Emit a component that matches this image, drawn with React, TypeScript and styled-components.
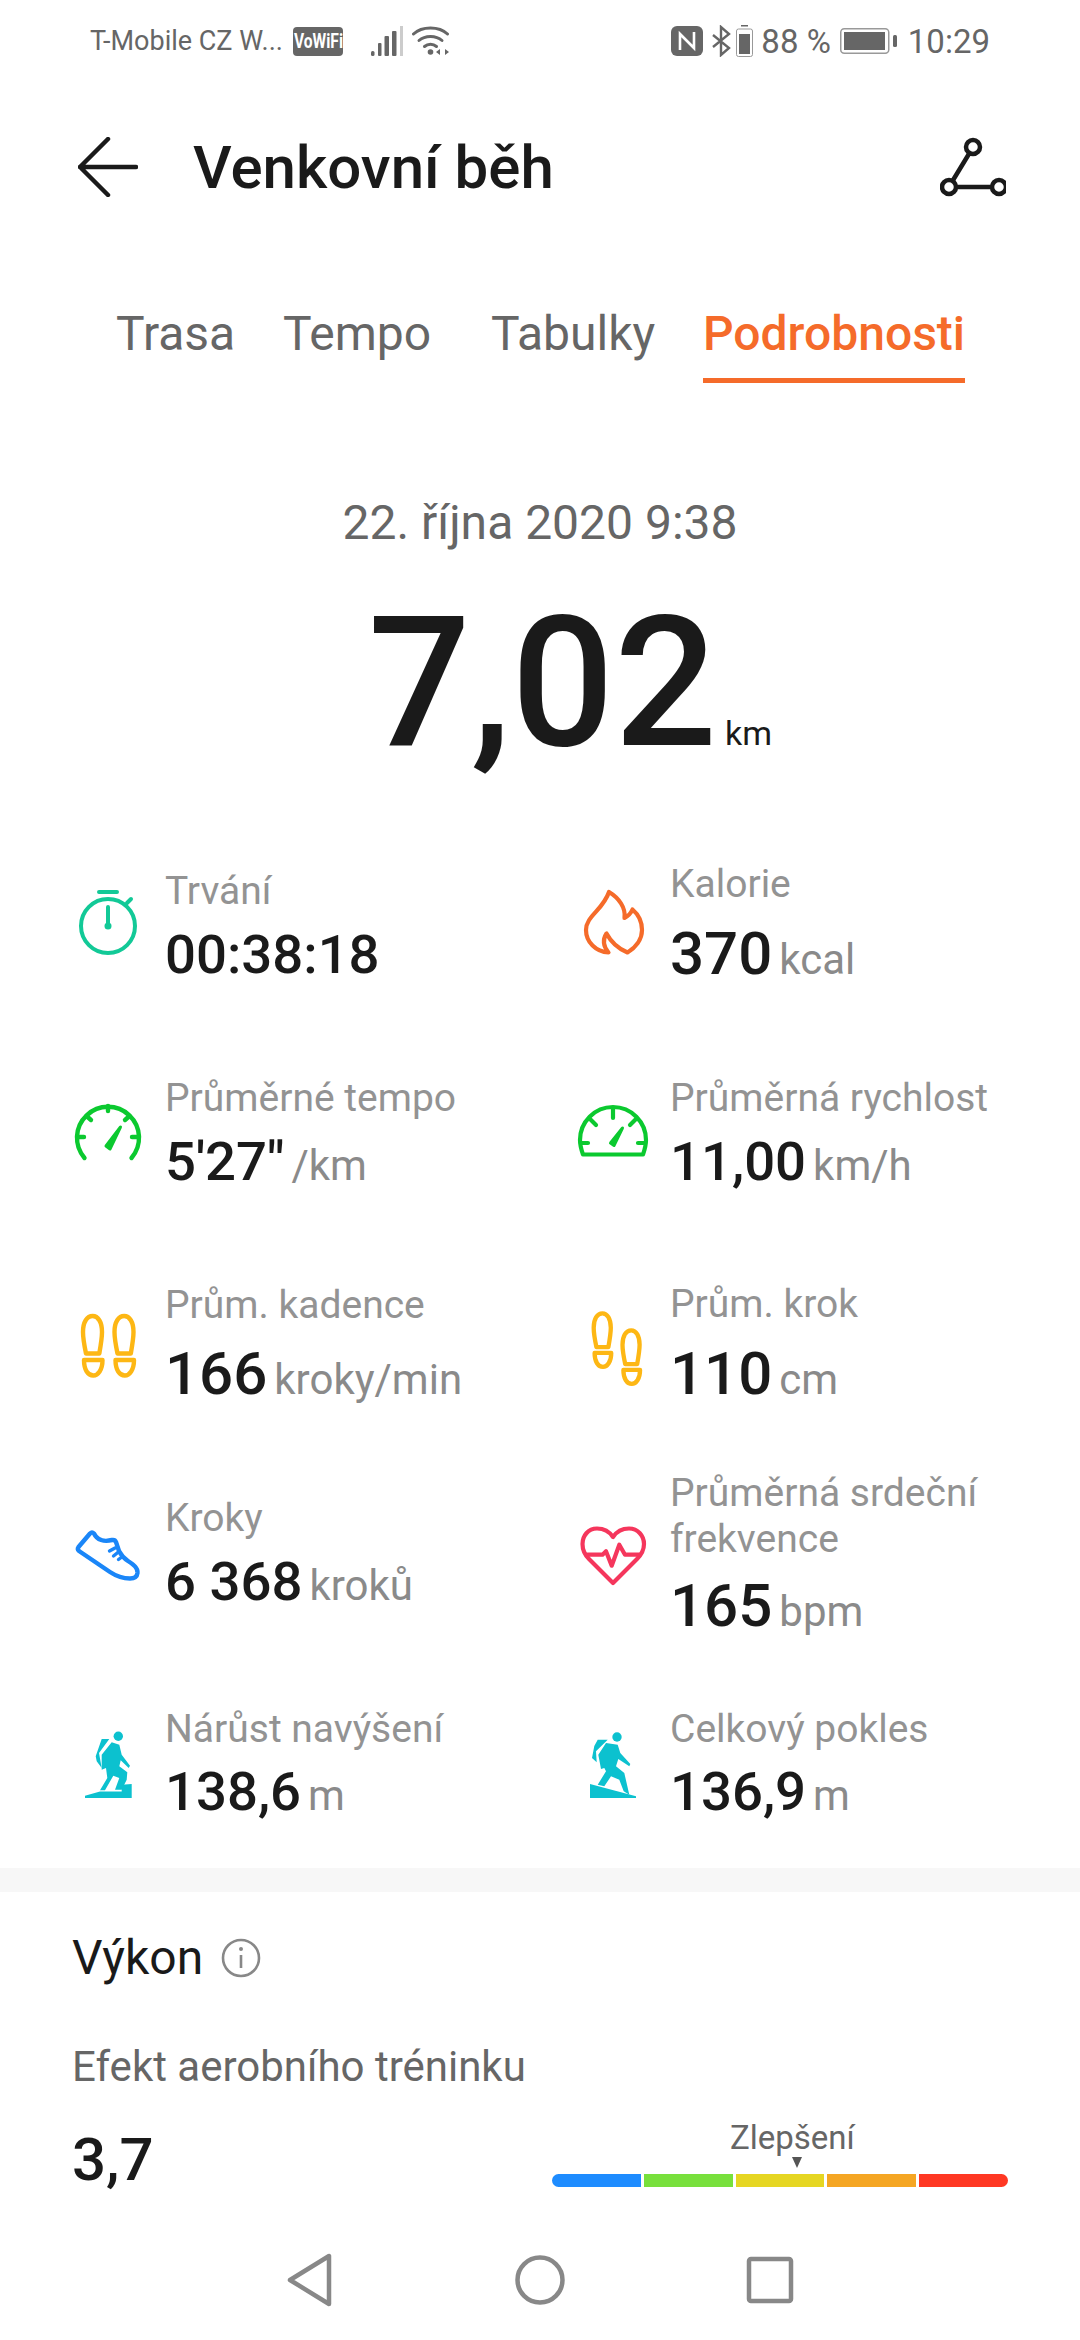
import React from "react"
import styled, { createGlobalStyle } from "styled-components"

const Global = createGlobalStyle`
  html, body { margin: 0; padding: 0; background: #fff; }
  body { font-family: Roboto, "Noto Sans", sans-serif; }
`

const Page = styled.div`
  width: 1080px;
  height: 2340px;
  overflow: hidden;
  background: #fff;
  display: flex;
  flex-direction: column;
`

const StatusBar = styled.div`
  height: 82px;
  padding: 0 90px 0 90px;
  display: flex;
  justify-content: space-between;
  align-items: center;
  color: #666;
`

const StatusGroup = styled.div`
  display: flex;
  align-items: center;
`

const Carrier = styled.span`
  font-size: 27px;
  width: 203px;
  white-space: nowrap;
`

const VoWifi = styled.span`
  width: 50px;
  height: 29px;
  border-radius: 4px;
  background: #666;
  color: #fff;
  margin-right: 28px;
  display: flex;
  justify-content: center;
  align-items: center;
  overflow: hidden;
`

const VoWifiText = styled.span`
  font-size: 20px;
  font-weight: 700;
  transform: scaleX(0.78);
  white-space: nowrap;
`

const StatusText = styled.span<{ $left?: number }>`
  font-size: 33px;
  margin-left: ${(p) => p.$left ?? 0}px;
`

const Header = styled.div`
  height: 170px;
  padding: 0 74px 0 78px;
  display: flex;
  align-items: center;
`

const Title = styled.h1`
  margin: 0 0 0 55px;
  flex: 1;
  font-size: 60px;
  font-weight: 500;
  color: #1a1a1a;
`

const Tabs = styled.div`
  height: 131px;
  padding-left: 116px;
  display: grid;
  grid-template-columns: 167px 208px 212px auto;
  justify-content: start;
  align-items: end;
`

const Tab = styled.div<{ $active?: boolean }>`
  justify-self: start;
  font-size: 48px;
  line-height: 60px;
  padding-bottom: 14px;
  font-weight: ${(p) => (p.$active ? 500 : 400)};
  color: ${(p) => (p.$active ? "#f56b2a" : "#666")};
  border-bottom: 5px solid ${(p) => (p.$active ? "#f56b2a" : "transparent")};
`

const DateLine = styled.div`
  margin-top: 110px;
  text-align: center;
  font-size: 48px;
  line-height: 60px;
  color: #666;
`

const Distance = styled.div`
  margin-top: 30px;
  padding-left: 60px;
  display: flex;
  justify-content: center;
  align-items: baseline;
  color: #1a1a1a;
`

const DistanceValue = styled.span`
  font-size: 181px;
  line-height: 200px;
  font-weight: 500;
`

const DistanceUnit = styled.span`
  margin-left: 8px;
  font-size: 34px;
`

const StatGrid = styled.div`
  margin-top: 34px;
  padding-left: 72px;
  display: grid;
  grid-template-columns: 505px 1fr;
  grid-auto-rows: 210px;
`

const Stat = styled.div`
  display: flex;
  align-items: center;
  gap: 21px;
`

const IconBox = styled.svg`
  width: 72px;
  height: 72px;
  flex: none;
  overflow: visible;
`

const StatText = styled.div`
  width: 360px;
`

const StatLabel = styled.div`
  font-size: 39px;
  line-height: 46px;
  color: #939393;
`

const StatValueRow = styled.div<{ $gap: number }>`
  margin-top: ${(p) => p.$gap}px;
  display: flex;
  align-items: baseline;
  line-height: 46px;
  white-space: nowrap;
`

const StatValue = styled.span<{ $large?: boolean }>`
  font-size: ${(p) => (p.$large ? 60 : 54.5)}px;
  font-weight: 500;
  color: #1a1a1a;
`

const StatUnit = styled.span`
  margin-left: 7px;
  font-size: 42px;
  color: #8a8a8a;
`

const Band = styled.div`
  margin-top: 1px;
  height: 24px;
  background: #f7f7f7;
`

const Performance = styled.div`
  padding: 41px 72px 0;
`

const SectionTitle = styled.div`
  display: flex;
  align-items: center;
  gap: 18px;
  font-size: 48px;
  line-height: 50px;
  color: #1a1a1a;
`

const SectionLabel = styled.div`
  margin-top: 59px;
  font-size: 42px;
  line-height: 50px;
  color: #666;
`

const EffectRow = styled.div`
  margin-top: 26px;
  display: flex;
  justify-content: space-between;
`

const EffectValue = styled.div`
  font-size: 60px;
  line-height: 84px;
  font-weight: 500;
  color: #1a1a1a;
`

const Gauge = styled.div`
  width: 456px;
`

const GaugeLabel = styled.div`
  padding-left: 178px;
  font-size: 33px;
  line-height: 40px;
  color: #666;
`

const GaugeMarker = styled.div<{ $left: number }>`
  width: 0;
  height: 0;
  margin: -1px 0 6px ${(p) => p.$left}px;
  border-left: 5px solid transparent;
  border-right: 5px solid transparent;
  border-top: 11px solid #555;
`

const GaugeBar = styled.div`
  height: 13px;
  display: flex;
  gap: 3px;
  border-radius: 7px;
  overflow: hidden;
`

const GaugeSegment = styled.div<{ $color: string }>`
  flex: 1;
  background: ${(p) => p.$color};
`

const NavBar = styled.div`
  flex: 1;
  padding-top: 18px;
  display: flex;
  justify-content: center;
  align-items: center;
  gap: 180px;
`

const NavIcon = styled.svg`
  width: 50px;
  height: 54px;
`

const StopwatchIcon = () => (
  <IconBox viewBox="0 0 72 72" fill="none" stroke="#12c997" strokeWidth="4" strokeLinecap="round">
    <circle cx="36" cy="40" r="27" />
    <path d="M27 6H45M55 17L59 13M36 21V40" />
    <circle cx="36" cy="40" r="3.5" fill="#12c997" stroke="none" />
  </IconBox>
)

const PaceIcon = () => (
  <IconBox viewBox="0 0 72 72" fill="none" stroke="#0bc92f" strokeWidth="4.4" strokeLinecap="round">
    <path d="M12.500 62A31 31 0 1 1 59.500 62" />
    <path d="M5 41H12M60 41H67M36 10V15M14.500 20L19 24M57.500 20L53 24" />
    <path d="M34 50L48.500 31L38 53Z" fill="#0bc92f" strokeWidth="3" strokeLinejoin="round" />
  </IconBox>
)

const SpeedIcon = () => (
  <IconBox viewBox="0 0 72 72" fill="none" stroke="#0bc92f" strokeWidth="4.2" strokeLinecap="round">
    <path d="M6 58.500Q3 50 3 44A33 33 0 0 1 69 44Q69 50 66 58.500Z" strokeLinejoin="round" />
    <path d="M4 47H11M61 47H68M36 13V22M13 23L19 29M59 23L53 29" />
    <path d="M33.500 47L45.500 32L37 49.500Z" fill="#0bc92f" strokeWidth="3" strokeLinejoin="round" />
  </IconBox>
)

const FlameIcon = () => (
  <IconBox viewBox="0 0 72 72" fill="none" stroke="#f56b2a" strokeWidth="4.2" strokeLinejoin="round">
    <path d="M32 6C42 12 49 22 47.500 32C51 30 54 27 55.500 23.500C62 29 65 37 65 44C65 54 58 62 50.500 66.500C42 63 34 56 29.500 47.500C26 53 26 60 31.500 66.500C19 66 9 56 9 44C9 30 26 24 32 6Z" />
  </IconBox>
)

const Foot = ({ transform }: { transform?: string }) => (
  <g transform={transform}>
    <path d="M14 47.500C12 38 11 32 11 26C11 16 15 10 20.700 10C26 10 30 16 30 26C30 32 29 38 27.300 47.500Z" />
    <path d="M12 54H30.500C30.500 64 26 69.500 21.300 69.500C16 69.500 12 64 12 54Z" />
  </g>
)

const CadenceIcon = () => (
  <IconBox viewBox="0 0 72 72" fill="none" stroke="#fdb714" strokeWidth="4.4" strokeLinejoin="round">
    <Foot />
    <Foot transform="translate(31.5 0)" />
  </IconBox>
)

const StrideIcon = () => (
  <IconBox viewBox="0 0 72 72" fill="none" stroke="#fdb714" strokeWidth="4.8" strokeLinejoin="round">
    <Foot transform="translate(6.8 -1.7) scale(.9)" />
    <Foot transform="translate(35.6 15.3) scale(.9)" />
  </IconBox>
)

const ShoeIcon = () => (
  <IconBox viewBox="0 0 72 72" fill="none" stroke="#1a86f8" strokeWidth="4.4" strokeLinecap="round" strokeLinejoin="round">
    <path d="M6.500 31L18 17.500Q20 15.500 22 17.500C25 24 32 26 40 24Q43 23.500 44 26L47 35Q50 41 56 45C62 49 66 52 65.500 57C65 61 62 62.500 58 62.500C50 62.500 44 60 38 56L7 35Q5 33 6.500 31Z" />
    <path d="M37.500 35L43 32M41.500 40L47 35.500M46.500 43.500L50.500 40.500" strokeWidth="3.4" />
  </IconBox>
)

const HeartIcon = () => (
  <IconBox viewBox="0 0 72 72" fill="none" stroke="#f5365c" strokeWidth="4.2" strokeLinejoin="round" strokeLinecap="round">
    <path d="M36 21C32 15 26 12.500 20 12.500C11 12.500 5.500 20 5.500 28C5.500 34 8 39 12 43L36 67L60 43C64 39 67 34 67 28C67 20 61 12.500 52 12.500C46 12.500 40 15 36 21Z" />
    <path d="M10.500 38.700H25.500L29 35.300L34.700 49.700L42.300 28.700L48 38.700H62" />
  </IconBox>
)

const ClimbIcon = () => (
  <IconBox viewBox="0 0 72 72" fill="#0cc1cf">
    <circle cx="46.300" cy="10.300" r="4.700" />
    <path d="M13 69.700L28 65.500H49.700V58.700L59.700 58V72H13Z" />
    <path d="M29.700 13H37.300L27 27L29.700 42L24.700 35.300L23.700 30.300Z" />
    <path d="M39.700 16.300L47.300 18.700L49.700 28.700L58 39.700L56.700 42L48.700 34.300L47.300 40.300L55.300 46.300L54.700 53.700L49.700 63.700H43L47.300 52L41.300 49.700L33 64.300H28L35.300 52L34 42L29.700 43.700L29.700 28.700Z" />
  </IconBox>
)

const DescentIcon = () => (
  <IconBox viewBox="0 0 72 72" fill="#0cc1cf">
    <circle cx="40" cy="11" r="4.700" />
    <path d="M13 58L59 70.300V72H13Z" />
    <path d="M20.700 13.700H30.700L19 25.300L19.700 36.300L15 32L17.300 20Z" />
    <path d="M29 17L40.700 18.700L43.300 27L53.300 38L52.300 40.300L41.300 33L39 40.300L47.300 47L52.300 68.700L46.700 65.300L42.300 53.700L34 50.300L27.300 60.300L20.700 58.700L29 45.300L27.300 42L24 43L21.300 28.700Z" />
  </IconBox>
)

const stats = [
  { icon: <StopwatchIcon />, label: "Trvání", value: "00:38:18", gap: 17 },
  { icon: <FlameIcon />, label: "Kalorie", value: "370", unit: "kcal", gap: 24, large: true },
  { icon: <PaceIcon />, label: "Průměrné tempo", value: "5'27\"", unit: "/km", gap: 17 },
  { icon: <SpeedIcon />, label: "Průměrná rychlost", value: "11,00", unit: "km/h", gap: 17 },
  { icon: <CadenceIcon />, label: "Prům. kadence", value: "166", unit: "kroky/min", gap: 23, large: true },
  { icon: <StrideIcon />, label: "Prům. krok", value: "110", unit: "cm", gap: 24, large: true },
  { icon: <ShoeIcon />, label: "Kroky", value: "6 368", unit: "kroků", gap: 17 },
  { icon: <HeartIcon />, label: "Průměrná srdeční frekvence", value: "165", unit: "bpm", gap: 21, large: true },
  { icon: <ClimbIcon />, label: "Nárůst navýšení", value: "138,6", unit: "m", gap: 16 },
  { icon: <DescentIcon />, label: "Celkový pokles", value: "136,9", unit: "m", gap: 16 },
]

const gaugeColors = ["#1e8cff", "#78e03c", "#e6d622", "#f5a623", "#ff3823"]

export default function App() {
  return (
    <Page>
      <Global />
      <StatusBar>
        <StatusGroup>
          <Carrier>T-Mobile CZ W...</Carrier>
          <VoWifi>
            <VoWifiText>VoWiFi</VoWifiText>
          </VoWifi>
          <svg width="32" height="30" viewBox="0 0 32 30" fill="#666">
            <rect x="0" y="25" width="3.5" height="5" rx="1.5" />
            <rect x="7" y="17" width="3.5" height="13" rx="1" />
            <rect x="13.5" y="10" width="4.5" height="20" rx="1" />
            <rect x="21" y="5" width="4.5" height="25" rx="1" />
            <rect x="29" y="0" width="3" height="30" fill="#ccc" />
          </svg>
          <svg width="38" height="30" viewBox="0 0 38 30" fill="none" stroke="#666" strokeWidth="3" strokeLinecap="round" style={{ marginLeft: 9 }}>
            <path d="M1.5 8C10 0 27 0 35.500 8" />
            <path d="M7 14.500C13 9 24 9 30 14.500" />
            <path d="M12.500 20.500C16 17.500 21 17.500 24.500 20.500" />
            <circle cx="18.500" cy="26" r="2.800" fill="#666" stroke="none" />
            <path d="M24 26L28 23V29ZM33 23L37 26L33 29Z" fill="#666" stroke="none" />
          </svg>
        </StatusGroup>
        <StatusGroup>
          <svg width="32" height="30" viewBox="0 0 32 30">
            <rect width="32" height="30" rx="6" fill="#666" />
            <path d="M9 24V8L23 22V6" fill="none" stroke="#fff" strokeWidth="2.600" />
          </svg>
          <svg width="20" height="32" viewBox="0 0 20 32" fill="none" stroke="#666" strokeWidth="2.400" style={{ marginLeft: 9 }}>
            <path d="M1 10L17 23L9 30V2L17 9L1 22" />
          </svg>
          <svg width="17" height="32" viewBox="0 0 17 32" style={{ marginLeft: 4 }}>
            <rect x="5" y="0" width="7" height="1.500" fill="#666" />
            <rect x="0.500" y="4" width="16" height="27.500" rx="2" fill="none" stroke="#999" />
            <rect x="3" y="9" width="11" height="20" fill="#666" />
          </svg>
          <StatusText $left={8}>88 %</StatusText>
          <svg width="57" height="26" viewBox="0 0 57 26" style={{ marginLeft: 9 }}>
            <rect x="0.750" y="0.750" width="48" height="24.500" rx="3.500" fill="none" stroke="#999" strokeWidth="1.500" />
            <rect x="4" y="4" width="41" height="18" fill="#666" />
            <rect x="53" y="7" width="4" height="12" rx="1.500" fill="#666" />
          </svg>
          <StatusText $left={11}>10:29</StatusText>
        </StatusGroup>
      </StatusBar>

      <Header>
        <svg width="60" height="60" viewBox="0 0 60 60" fill="none" stroke="#1a1a1a" strokeWidth="4.500" strokeLinecap="round" strokeLinejoin="round">
          <path d="M30 2L2 30L30 58M2 30H58" />
        </svg>
        <Title>Venkovní běh</Title>
        <svg width="66" height="60" viewBox="0 0 66 60" fill="none" stroke="#1a1a1a" strokeWidth="4.500">
          <circle cx="33" cy="10" r="7" />
          <circle cx="9" cy="50" r="7" />
          <circle cx="59" cy="50" r="7" />
          <path d="M29.500 16L12.500 44M16 50H52" />
        </svg>
      </Header>

      <Tabs>
        <Tab>Trasa</Tab>
        <Tab>Tempo</Tab>
        <Tab>Tabulky</Tab>
        <Tab $active>Podrobnosti</Tab>
      </Tabs>

      <DateLine>22. října 2020 9:38</DateLine>
      <Distance>
        <DistanceValue>7,02</DistanceValue>
        <DistanceUnit>km</DistanceUnit>
      </Distance>

      <StatGrid>
        {stats.map((s) => (
          <Stat key={s.label}>
            {s.icon}
            <StatText>
              <StatLabel>{s.label}</StatLabel>
              <StatValueRow $gap={s.gap}>
                <StatValue $large={s.large}>{s.value}</StatValue>
                {s.unit && <StatUnit>{s.unit}</StatUnit>}
              </StatValueRow>
            </StatText>
          </Stat>
        ))}
      </StatGrid>

      <Band />

      <Performance>
        <SectionTitle>
          Výkon
          <svg width="40" height="40" viewBox="0 0 40 40" fill="none" stroke="#888" strokeWidth="2.600">
            <circle cx="20" cy="20" r="18" />
            <path d="M20 17V30" />
            <circle cx="20" cy="11" r="2" fill="#888" stroke="none" />
          </svg>
        </SectionTitle>
        <SectionLabel>Efekt aerobního tréninku</SectionLabel>
        <EffectRow>
          <EffectValue>3,7</EffectValue>
          <Gauge>
            <GaugeLabel>Zlepšení</GaugeLabel>
            <GaugeMarker $left={240} />
            <GaugeBar>
              {gaugeColors.map((c) => (
                <GaugeSegment key={c} $color={c} />
              ))}
            </GaugeBar>
          </Gauge>
        </EffectRow>
      </Performance>

      <NavBar>
        <NavIcon viewBox="0 0 50 54" fill="none" stroke="#888" strokeWidth="4.500" strokeLinejoin="round">
          <path d="M44 3V51L5 27Z" />
        </NavIcon>
        <NavIcon viewBox="0 0 50 54" fill="none" stroke="#888" strokeWidth="4.500">
          <circle cx="25" cy="27" r="22.500" />
        </NavIcon>
        <NavIcon viewBox="0 0 50 54" fill="none" stroke="#888" strokeWidth="4.500" strokeLinejoin="round">
          <rect x="4" y="6" width="42" height="42" rx="2" />
        </NavIcon>
      </NavBar>
    </Page>
  )
}
